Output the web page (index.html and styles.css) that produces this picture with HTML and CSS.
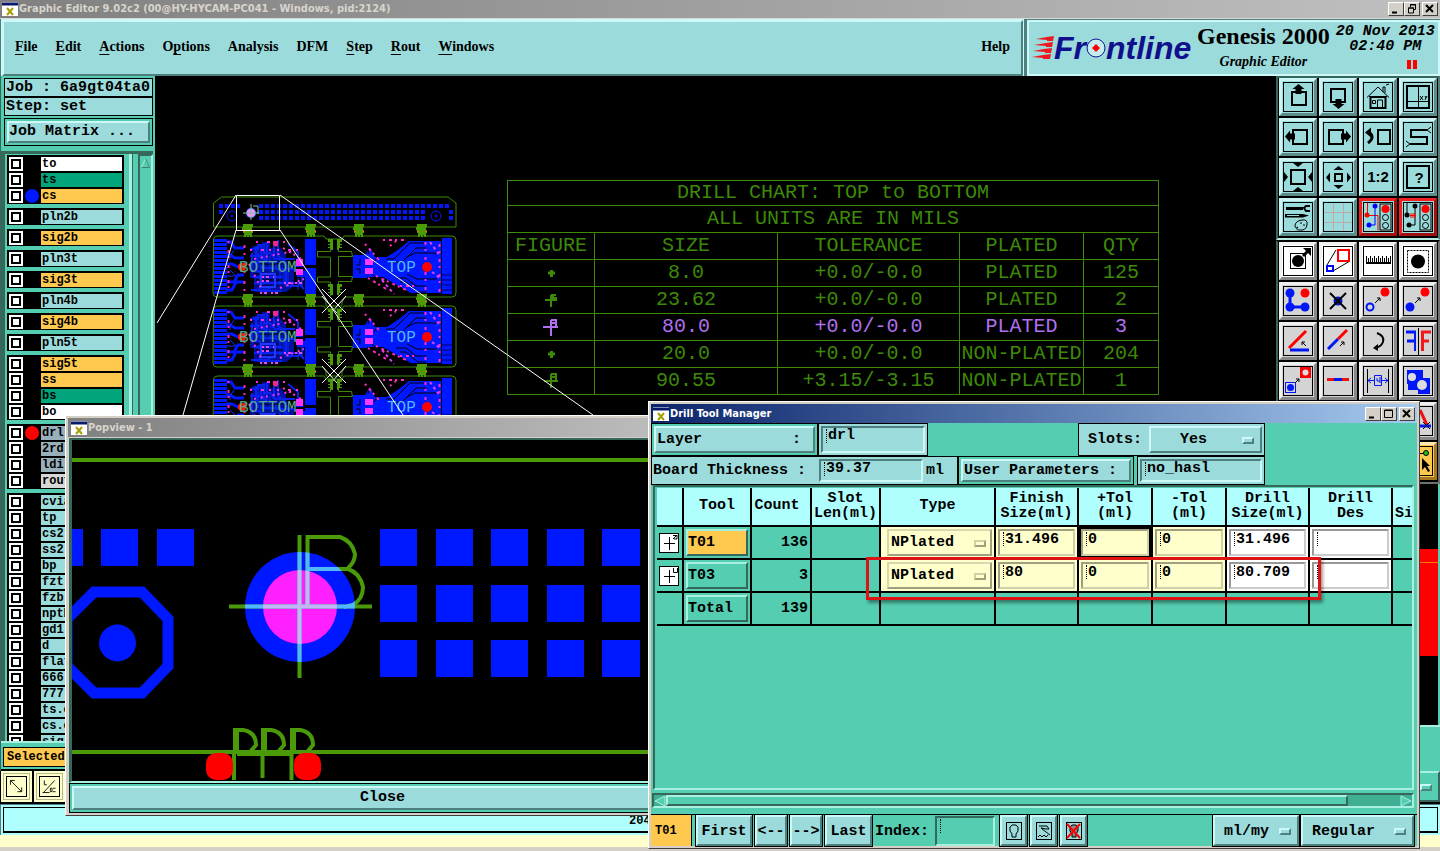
FILE: index.html
```html
<!DOCTYPE html>
<html lang="en">
<head>
  <meta charset="UTF-8">
  <meta name="viewport" content="width=device-width, initial-scale=1.0">
  <title>Graphic Editor 9.02c2</title>
  <link rel="stylesheet" href="styles.css">
</head>
<body>
  <div class="titlebar">
    <svg class="app-icon" viewBox="0 0 16 16"><rect width="16" height="14" y="1" fill="#fff"/><path d="M0 3h16" stroke="#0a1a6a" stroke-width="3"/><path d="M5 7l6 7M11 7l-6 7" stroke="#a8a000" stroke-width="2"/></svg>
    <span class="title">Graphic Editor 9.02c2 (00@HY-HYCAM-PC041 - Windows, pid:2124)</span>
    <button class="win-btn" aria-label="Minimize"><svg viewBox="0 0 12 10"><path d="M2 8.500h5" stroke="#000" stroke-width="2"/></svg></button>
    <button class="win-btn" aria-label="Restore"><svg viewBox="0 0 12 10"><path d="M4.500 3V.5h5v5H8M4 1h6" fill="none" stroke="#000"/><path d="M2.500 4h5v5h-5zM2 4h6" fill="none" stroke="#000"/></svg></button>
    <button class="win-btn last" aria-label="Close"><svg viewBox="0 0 12 10"><path d="M2 1l7 7M9 1L2 8" stroke="#000" stroke-width="2"/></svg></button>
  </div>

  <header class="header">
    <nav class="menubar">
      <a href="#"><u>F</u>ile</a>
      <a href="#"><u>E</u>dit</a>
      <a href="#"><u>A</u>ctions</a>
      <a href="#">O<u>p</u>tions</a>
      <a href="#">Analysis</a>
      <a href="#">DFM</a>
      <a href="#"><u>S</u>tep</a>
      <a href="#"><u>R</u>out</a>
      <a href="#"><u>W</u>indows</a>
      <a href="#" class="help">Help</a>
    </nav>
    <div class="brand">
      <div class="logo">
        <svg class="logo-arrows" viewBox="0 0 22 24"><g fill="#f01820"><path d="M4 3l11-2 7-1-1 5-6 0V4zM2 9l12-2 7-1-1 5-6 0v-1zM1 15l11-2 8-1-1 5-6 0v-1zM0 21l11-2 8-1-1 5-7 0v-1z"/></g></svg>
        <span>Fr</span>
        <svg class="logo-o" viewBox="0 0 20 20"><circle cx="10" cy="10" r="9" fill="#c4eeee" stroke="#10108c" stroke-width="1"/><path d="M10 6l4 4-4 4-4-4z" fill="#f00"/></svg>
        <span>ntline</span>
      </div>
      <div class="product">
        <div class="product-name">Genesis 2000</div>
        <div class="product-sub">Graphic Editor</div>
      </div>
      <div class="clock">
        <div>20 Nov 2013</div>
        <div>02:40 PM</div>
        <svg class="pause" viewBox="0 0 10 9"><path d="M0 0h4v9H0zM6 0h4v9H6z" fill="#f00"/></svg>
      </div>
    </div>
  </header>

  <main class="workspace">
    <aside class="sidebar">
      <div class="info">Job : 6a9gt04ta0</div>
      <div class="info">Step: set</div>
      <div class="matrix"><button>Job Matrix ...</button></div>
      <div class="layers">
        <div class="layer-list">
          <div class="group">
            <label class="layer"><input type="checkbox"><i></i><span class="white">to</span></label>
            <label class="layer"><input type="checkbox"><i></i><span class="green">ts</span></label>
            <label class="layer"><input type="checkbox"><i class="blue"></i><span class="orange">cs</span></label>
          </div>
          <div class="group"><label class="layer"><input type="checkbox"><i></i><span>pln2b</span></label></div>
          <div class="group"><label class="layer"><input type="checkbox"><i></i><span class="orange">sig2b</span></label></div>
          <div class="group"><label class="layer"><input type="checkbox"><i></i><span>pln3t</span></label></div>
          <div class="group"><label class="layer"><input type="checkbox"><i></i><span class="orange">sig3t</span></label></div>
          <div class="group"><label class="layer"><input type="checkbox"><i></i><span>pln4b</span></label></div>
          <div class="group"><label class="layer"><input type="checkbox"><i></i><span class="orange">sig4b</span></label></div>
          <div class="group"><label class="layer"><input type="checkbox"><i></i><span>pln5t</span></label></div>
          <div class="group">
            <label class="layer"><input type="checkbox"><i></i><span class="orange">sig5t</span></label>
            <label class="layer"><input type="checkbox"><i></i><span class="orange">ss</span></label>
            <label class="layer"><input type="checkbox"><i></i><span class="green">bs</span></label>
            <label class="layer"><input type="checkbox"><i></i><span class="white">bo</span></label>
          </div>
          <div class="group">
            <label class="layer"><input type="checkbox"><i class="red"></i><span class="slate">drl</span></label>
            <label class="layer"><input type="checkbox"><i></i><span class="slate">2rd</span></label>
            <label class="layer"><input type="checkbox"><i></i><span class="slate">ldi</span></label>
            <label class="layer"><input type="checkbox"><i></i><span class="silver">rout</span></label>
          </div>
          <div class="group">
            <label class="layer"><input type="checkbox"><i></i><span>cvia</span></label>
            <label class="layer"><input type="checkbox"><i></i><span>tp</span></label>
            <label class="layer"><input type="checkbox"><i></i><span>cs2</span></label>
            <label class="layer"><input type="checkbox"><i></i><span>ss2</span></label>
            <label class="layer"><input type="checkbox"><i></i><span>bp</span></label>
            <label class="layer"><input type="checkbox"><i></i><span>fzt</span></label>
            <label class="layer"><input type="checkbox"><i></i><span>fzb</span></label>
            <label class="layer"><input type="checkbox"><i></i><span>npth</span></label>
            <label class="layer"><input type="checkbox"><i></i><span>gd1</span></label>
            <label class="layer"><input type="checkbox"><i></i><span>d</span></label>
            <label class="layer"><input type="checkbox"><i></i><span>flat</span></label>
            <label class="layer"><input type="checkbox"><i></i><span>666</span></label>
            <label class="layer"><input type="checkbox"><i></i><span>777</span></label>
            <label class="layer"><input type="checkbox"><i></i><span>ts.o</span></label>
            <label class="layer"><input type="checkbox"><i></i><span>cs.o</span></label>
            <label class="layer"><input type="checkbox"><i></i><span>sig</span></label>
          </div>
        </div>
        <div class="vscroll"><svg viewBox="0 0 10 12"><path d="M5 1l4.500 10h-9z" fill="#55cdb0" stroke="#a8f0e0"/><path d="M5 1l4.500 10h-9" fill="none" stroke="#2f7765"/></svg></div>
      </div>
      <div class="selected"><span>Selected</span></div>
    </aside>

    <section class="canvas">
      <svg class="board">
        <defs>
          <g id="tab" fill="#4b9a08">
            <path d="M-5-7h10v3h-1v3h1v3h-1v4h-2v-2h-1v2h-2v-2h-1v2h-2v-4h-1v-3h-1v-3h1z"/>
            <path d="M-5 0h2v1h-2zM3 0h2v1h-2z" fill="#e07010"/>
          </g>
          <g id="clip" fill="#4b9a08">
            <path d="M-7-5h5v11h-2v-2h-3v-1h2v-2h-2v-1h2v-2h-2zM7-5h-5v11h2v-2h3v-1h-2v-2h2v-1h-2v-2h2z"/>
          </g>
          <g id="module">
            <g fill="none" stroke="#3d8a08">
              <path d="M13.500 60q0-4 4-4H124l2 3h16l2-3H252q4 0 4 4V113q0 4-4 4H145l-3 5v4h-16v-4l-3-5H17q-4 0-4-4z"/>
              <path d="M118 71.500h12.500v-12M138.500 59v12.500h13l1 5h-14v20h14l-1 5h-13v14M130.500 116v-14h-13v-5h13v-20h-13v-6"/>
            </g>
            <!-- edge connector and left artwork -->
            <path d="M20.500 59V115" stroke="#0018ff" stroke-width="13" stroke-dasharray="3 1"/>
            <path d="M26 62h5l4 6h9M26 75h4l5 3h9M26 84h6l8 4M26 102h8l4-7h6M26 110h6l4-8h8" fill="none" stroke="#0018ff" stroke-width="3"/>
            <path d="M30 80v-4l4-6M30 90l6 6M27 96h8" fill="none" stroke="#1030ff"/>
            <path d="M52 66h10v-4h8v6h10l6 6v10l8 6v16l-8 6H54V98h-4V80h4z" fill="#0010a0"/>
            <path d="M50 69h8v-4h6v8h6l5 6h20M50 76h12l6 7h8v6h18M51 82h10v6h14M52 73v18h8v20h22M56 66v26M61 66v14M67 62v20M74 64v14M52 97h30M54 103h44l6 6M51 110h16l6-4h26M78 60v16l8 6v24M88 64l10 8v14M92 88l10 6v14" fill="none" stroke="#0820f0" stroke-width="2"/>
            <path d="M58 72v16M64 70v20M70 76v14M80 84v24M84 90v16M88 92v10M66 110v5M98 98v12" fill="none" stroke="#0828ff"/>
            <path d="M54 94h24M56 100h26M57 106h28M83 72h12M60 84h22" fill="none" stroke="#000"/>
            <path d="M61 94h14v13H61z" fill="none" stroke="#2038ff" stroke-width="2"/>
            <path d="M28.500 61V114" stroke="#ff28c0" stroke-width="2" stroke-dasharray="2 7 3 3"/>
            <path d="M44.500 65V114" stroke="#f030a0" stroke-width="2" stroke-dasharray="3 5 2 8"/>
            <path d="M50 70h52M56 62h34" stroke="#ff30d8" stroke-width="2" stroke-dasharray="2 9 3 5 2 6"/>
            <path d="M54 79l40-8M83 68l20 12M80 108l24-9M49 84l14 28" stroke="#ff30f0" stroke-width="2" stroke-dasharray="2 5 2 3"/>
            <path d="M62 97h12M62 101h10M60 113h22M84 103h20" stroke="#e048ff" stroke-width="2" stroke-dasharray="2 2 3 4"/>
            <path d="M73 61h5v4l-2 2-3-2z" fill="#f02890"/>
            <path d="M105 59h11v26h-11zM105 88h11v26h-11zM94 85h9v2h-9zM97 91h8v6h-8z" fill="#0018ff"/>
            <path d="M96 79h7v7h-7zM96 89h7v6h-7z" fill="#ff30ff"/>
            <!-- fan-out on the right part -->
            <path d="M153 75h12l5-8 5 10h12l12-8 10-8h32v52h-30l-14-8-14-8h-16v1h-14zM242 58h10v56h-10z" fill="#0018ff"/>
            <path d="M186 79h8l16-16h14M190 82h12l14-14h10M196 98h10l10 8h10M200 102h6l12 10h8M207 94l10 5h20M207 77l8-4h24M170 66l-2 8M160 79v6h-4M160 94v-5h-4M178 76l-4 6M176 98l-4-4" fill="none" stroke="#000"/>
            <path d="M242 95h10M242 100h10M242 105h10M242 110h10" stroke="#000058"/>
            <path d="M165 79h8v6h-8zM165 88h8v6h-8z" fill="#ff38ff"/>
            <path d="M165 64l14 16M190 66l6-5M183 60h24M168 98l20 12M176 96l30 14M200 106h16" stroke="#ff2cc0" stroke-width="2" stroke-dasharray="2 4 3 3"/>
            <path d="M225.500 62V114M239.500 64V112" stroke="#ff28e0" stroke-width="2" stroke-dasharray="3 4 2 6"/>
            <path d="M230 62l10 14M232 92l8 6M182 100l12 14" stroke="#e040ff" stroke-width="2" stroke-dasharray="3 3"/>
            <circle cx="42" cy="87" r="4" fill="#ff2000"/>
            <circle cx="227" cy="87" r="5" fill="#f00"/>
            <text x="39" y="92" fill="#58a888">BOTTOM</text>
            <text x="187" y="92" fill="#50b8ff">TOP</text>
            <use href="#tab" x="48" y="51"/><use href="#tab" x="111" y="51"/>
            <use href="#tab" x="159" y="51"/><use href="#tab" x="222" y="51"/>
            <use href="#clip" x="135" y="64"/>
            <use href="#clip" x="135" y="109"/>
            <path d="M122 109l24 24M146 109l-24 24M122 116l15 17M146 116l-15 17" stroke="#fff" stroke-width="1"/>
          </g>
        </defs>
        <g transform="translate(45 104)">
          <path d="M13.500 23l8-6H248l8 6V47H13.500z" fill="none" stroke="#3d8a08"/>
          <path d="M19 26h21M59 26h190M19 32h4M59 32h166M59 38h166M249 32h4M249 38h4" stroke="#0018ff" stroke-width="4" stroke-dasharray="4 2"/>
          <g fill="none" stroke="#0018ff" stroke-width="1">
            <circle cx="32" cy="36" r="5"/><circle cx="32" cy="36" r="1"/>
            <circle cx="236" cy="36" r="5"/><circle cx="236" cy="36" r="1"/>
          </g>
          <circle cx="51" cy="33" r="5" fill="#5080ff"/><circle cx="51" cy="33" r="4" fill="#ff90ff"/>
          <path d="M43 33h16M51 24v16M53 26h5v8" fill="none" stroke="#78c8a0"/>
          <use href="#module"/>
          <use href="#module" y="70"/>
          <use href="#module" y="140"/>
          <g fill="none" stroke="#fff">
            <path d="M36.500 15.500h43v35h-43zM36 15L-43 143M36 50L-17 235M80 15L393 235M80 50L203 235"/>
          </g>
        </g>
      </svg>

      <table class="drill-chart">
        <colgroup><col class="c1"><col class="c2"><col class="c3"><col class="c4"><col class="c5"></colgroup>
        <thead>
          <tr class="chart-title"><th colspan="5">DRILL CHART: TOP to BOTTOM</th></tr>
          <tr><th colspan="5">ALL UNITS ARE IN MILS</th></tr>
          <tr><th>FIGURE</th><th>SIZE</th><th>TOLERANCE</th><th>PLATED</th><th>QTY</th></tr>
        </thead>
        <tbody>
          <tr><td><svg viewBox="0 0 16 20"><path d="M5 10h7M8.500 7v7" stroke="#3d8a08" stroke-width="3"/></svg></td><td>8.0</td><td>+0.0/-0.0</td><td>PLATED</td><td>125</td></tr>
          <tr><td><svg viewBox="0 0 16 20"><path d="M2 10h12M8 5v12" stroke="#3d8a08" stroke-width="2"/><path d="M8 4h5v2h-2v1h3v3H8z" fill="#3d8a08"/></svg></td><td>23.62</td><td>+0.0/-0.0</td><td>PLATED</td><td>2</td></tr>
          <tr class="current"><td><svg viewBox="0 0 16 20"><path d="M0 10h15M8 3v16" stroke="#b070f0" stroke-width="2"/><path d="M8 3h5v7M8 6h5" fill="none" stroke="#b070f0" stroke-width="2"/></svg></td><td>80.0</td><td>+0.0/-0.0</td><td>PLATED</td><td>3</td></tr>
          <tr><td><svg viewBox="0 0 16 20"><path d="M5 10h7M8.500 7v7" stroke="#3d8a08" stroke-width="3"/></svg></td><td>20.0</td><td>+0.0/-0.0</td><td>NON-PLATED</td><td>204</td></tr>
          <tr><td><svg viewBox="0 0 16 20"><path d="M1 10h14M8 3v14" stroke="#3d8a08" stroke-width="2"/><path d="M8 3h5v7M8 6h5" fill="none" stroke="#3d8a08" stroke-width="2"/></svg></td><td>90.55</td><td>+3.15/-3.15</td><td>NON-PLATED</td><td>1</td></tr>
        </tbody>
      </table>
    </section>

    <aside class="toolbox">
      <div class="tools view-tools">
        <button aria-label="Pan up"><svg viewBox="0 0 30 30"><rect x="9" y="10" width="14" height="13" class="s2"/><path d="M15.500 2l6 5h-3v5h-6V7h-3z"/></svg></button>
        <button aria-label="Pan down"><svg viewBox="0 0 30 30"><rect x="8" y="7" width="14" height="13" class="s2"/><path d="M15.500 27l-6-5h3v-5h6v5h3z"/></svg></button>
        <button aria-label="Home view"><svg viewBox="0 0 30 30"><path d="M4 15.500L15 5l11 10.500M6 14.500h18M20 10V5h2v6M23 3l3-1" class="s1"/><rect x="7.500" y="15" width="15" height="11" class="s2"/><path d="M14.500 26v-8h5v8M9.500 18.500h3v3h-3z" class="s1"/></svg></button>
        <button aria-label="Coordinates"><svg viewBox="0 0 30 30"><rect x="4" y="4" width="22" height="22" class="s2"/><path d="M15.500 4v22M4 19.500h22" class="s1"/><path d="M17 14l3 4M20 14l-3 4M22 14l1 2M24 14l-2 4" class="s1"/></svg></button>
        <button aria-label="Pan left"><svg viewBox="0 0 30 30"><rect x="10" y="8" width="14" height="14" class="s2"/><path d="M2 14.500l5-6v3h5v6H7v3z"/></svg></button>
        <button aria-label="Pan right"><svg viewBox="0 0 30 30"><rect x="6" y="8" width="14" height="14" class="s2"/><path d="M28 14.500l-5-6v3h-5v6h5v3z"/></svg></button>
        <button aria-label="Previous view"><svg viewBox="0 0 30 30"><rect x="15" y="8" width="12" height="14" class="s2"/><path d="M5 11h2q5 5-2 10" class="s3"/><path d="M2 10.500l6-5v10z"/></svg></button>
        <button aria-label="Snake"><svg viewBox="0 0 30 30"><path d="M24 8H8v7h16v7H7" class="s2"/><path d="M24 8l4-3M24 8l4 3M7 22l-4-3M7 22l-4 3" class="s1"/></svg></button>
        <button aria-label="Zoom out"><svg viewBox="0 0 30 30"><rect x="8" y="8" width="14" height="14" class="s2"/><path d="M15 5l-5-4h10zM15 25l-5 4h10zM5 15l-4-5v10zM25 15l4-5v10z"/></svg></button>
        <button aria-label="Zoom in"><svg viewBox="0 0 30 30"><rect x="12" y="12" width="7" height="7" class="s2"/><path d="M15.500 4l-5 4h10zM15.500 27l-5-4h10zM3 15.500l4-5v10zM28 15.500l-4-5v10z"/></svg></button>
        <button aria-label="Zoom ratio"><svg viewBox="0 0 30 30"><text x="15" y="20">1:2</text></svg></button>
        <button aria-label="Help"><svg viewBox="0 0 30 30"><rect x="4" y="4" width="22" height="22" class="s2"/><text x="16" y="21">?</text></svg></button>
        <button aria-label="Preferences"><svg viewBox="0 0 30 30"><path d="M3 5h17v3H3zM2 12h18l6 1.500-6 2H2z"/><path d="M27 4h-4l-2 2 2 3h4" class="s2"/><path d="M4 13.500h12" stroke="#9bdbdb"/><path d="M12 24q0-5 7-6 6-1 5 5t-8 5q-4 0-1-3-3 2-3-1zM17 21h2M21 22v2" class="s1"/></svg></button>
        <button aria-label="Grid"><svg viewBox="0 0 30 30"><path d="M10.500 1v28M20.500 1v28M1 10.500h28M1 20.500h28" stroke="#c0a8a8" fill="none"/></svg></button>
        <button class="alert" aria-label="Net check"><svg viewBox="0 0 30 30"><rect x="17" y="2" width="11" height="26" class="s1"/><circle cx="22.500" cy="7" r="4" fill="#f00"/><circle cx="22.500" cy="15.500" r="3" class="s1"/><circle cx="22.500" cy="23.500" r="3" class="s1"/><path d="M4.500 1v12M4 13.500h11v15" stroke="#f00" fill="none"/><path d="M12 4v19H6" stroke="#00f" fill="none"/><circle cx="12" cy="4" r="2.500" fill="#00f"/><circle cx="6" cy="23" r="2.500" fill="#00f"/><circle cx="4" cy="13" r="2.500" fill="#f00"/></svg></button>
        <button class="alert" aria-label="Spacing check"><svg viewBox="0 0 30 30"><rect x="17" y="2" width="11" height="26" class="s1"/><circle cx="22.500" cy="7" r="4" fill="#f00"/><circle cx="22.500" cy="15.500" r="3" class="s1"/><circle cx="22.500" cy="23.500" r="3" class="s1"/><path d="M4 1v12M12 4v19H7" class="s1"/><path d="M7 13.500h6M8 11v5M10 11v5M12 11v5" stroke="#f00"/><circle cx="12" cy="4" r="2.500"/><circle cx="6" cy="23" r="2.500"/><circle cx="4" cy="13" r="2.500"/></svg></button>
      </div>
      <div class="tools edit-tools">
        <button class="paper" aria-label="Select"><svg viewBox="0 0 30 30"><rect x="7.500" y="7.500" width="15" height="15" class="s1"/><circle cx="15" cy="15" r="6"/><path d="M20 10l5-5" class="s3"/><path d="M20 2h8v8z"/></svg></button>
        <button class="paper" aria-label="Frame select"><svg viewBox="0 0 30 30"><path d="M4 19L13 4M10 25l17-10" class="s1"/><rect x="15" y="4" width="11" height="11" fill="none" stroke="#f00" stroke-width="2"/><rect x="4" y="20" width="6" height="5" fill="none" stroke="#00f" stroke-width="2"/></svg></button>
        <button class="paper" aria-label="Measure"><svg viewBox="0 0 30 30"><path d="M3 16h25v2H3z"/><path d="M3 14h25" stroke="#000" stroke-width="4" stroke-dasharray="1 1"/><path d="M3 12h25" stroke="#000" stroke-width="4" stroke-dasharray="1 3"/></svg></button>
        <button class="paper" aria-label="Pad select"><svg viewBox="0 0 30 30"><rect x="4.500" y="4.500" width="21" height="22" class="s1" stroke-dasharray="2 1"/><circle cx="15" cy="15.500" r="7"/></svg></button>
        <button aria-label="Connect"><svg viewBox="0 0 30 30"><path d="M7 7v14h15" fill="none" stroke="#0018f8" stroke-width="3"/><g fill="#0018f8"><circle cx="7" cy="7" r="4.500"/><circle cx="7" cy="21" r="4.500"/><circle cx="22" cy="21" r="4.500"/></g><circle cx="22" cy="7" r="4.500" fill="#f00"/></svg></button>
        <button aria-label="Delete"><svg viewBox="0 0 30 30"><circle cx="15" cy="15" r="4.500" fill="#0018c8"/><path d="M7 7l16 16M23 7L7 23" class="s2"/></svg></button>
        <button aria-label="Move"><svg viewBox="0 0 30 30"><circle cx="7" cy="21" r="3.500" fill="none" stroke="#0018f8" stroke-width="2"/><circle cx="22" cy="6" r="4.500" fill="#f00"/><path d="M12 17l5-5M14 12h3v3" class="s1"/></svg></button>
        <button aria-label="Copy"><svg viewBox="0 0 30 30"><circle cx="7" cy="21" r="4.500" fill="#0018f8"/><circle cx="22" cy="6" r="4.500" fill="#f00"/><path d="M12 17l5-5M14 12h3v3" class="s1"/></svg></button>
        <button aria-label="Angle"><svg viewBox="0 0 30 30"><path d="M6 22L23 5" stroke="#f00" stroke-width="3"/><path d="M7 24h19" stroke="#0018f8" stroke-width="3"/><path d="M23 20l-4-4M19 19v-3h3" class="s1"/></svg></button>
        <button aria-label="Stretch"><svg viewBox="0 0 30 30"><path d="M5 23l10-10" stroke="#0018f8" stroke-width="3"/><path d="M15 13l9-9" stroke="#f00" stroke-width="3"/><path d="M17 20l4-4M18 16h3v3" class="s1"/></svg></button>
        <button aria-label="Rotate"><svg viewBox="0 0 30 30"><path d="M14 7q8 3 6 9-2 5-8 6" class="s2"/><path d="M10 22l5-4v7z"/></svg></button>
        <button aria-label="Mirror"><svg viewBox="0 0 30 30"><path d="M15.500 2v27" class="s1"/><g stroke="#0018f8" stroke-width="2"><line x1="12" y1="5" x2="12" y2="25"/><line x1="3" y1="6" x2="13" y2="6" stroke-width="3"/><line x1="4" y1="15" x2="12" y2="15" stroke-width="3"/></g><g stroke="#f01818" stroke-width="3"><line x1="19.500" y1="5" x2="19.500" y2="25"/><line x1="18" y1="6" x2="28" y2="6"/><line x1="19" y1="15" x2="26" y2="15"/></g></svg></button>
        <button aria-label="Substitute"><svg viewBox="0 0 30 30"><rect x="17" y="1" width="11" height="11" fill="#f00"/><circle cx="22.500" cy="6.500" r="3" fill="#ddd"/><rect x="2.500" y="16.500" width="10" height="10" fill="none" stroke="#0018f8"/><circle cx="7.500" cy="21.500" r="3.500" fill="#0018f8"/><path d="M12 17l4-4M13 13h3v3" class="s1"/></svg></button>
        <button aria-label="Break"><svg viewBox="0 0 30 30"><path d="M4 13.500h22" stroke="#f01010" stroke-width="3"/><path d="M11 13.500h8" stroke="#0018f8" stroke-width="3"/></svg></button>
        <button aria-label="Resize"><svg viewBox="0 0 30 30"><path d="M4.500 3v24M25.500 3v24" class="s1"/><path d="M5 14.500h6M19 14.500h6M8 12l-3 2.500 3 2.500M22 12l3 2.500-3 2.500M11.500 9.500h7v10h-7zM14 12v3h3M17 11v6" fill="none" stroke="#0018f8"/></svg></button>
        <button aria-label="Merge"><svg viewBox="0 0 30 30"><path d="M4 4h16v8h7v16H15v-4H5V18H4z" fill="#0018f8"/><circle cx="9" cy="11" r="4" fill="#ddd"/><circle cx="19" cy="19" r="5" fill="#ddd"/></svg></button>
        <button aria-label="Chamfer"><svg viewBox="0 0 30 30"></svg></button>
        <button aria-label="Surface"><svg viewBox="0 0 30 30"></svg></button>
        <button aria-label="Fill"><svg viewBox="0 0 30 30"></svg></button>
        <button aria-label="Trim"><svg viewBox="0 0 30 30"><path d="M17 4l7 15" fill="none" stroke="#f01010" stroke-width="3"/><path d="M2 20h26" stroke="#0018f8" stroke-width="3"/><path d="M20 16l7 7M27 16l-7 7" class="s1"/></svg></button>
        <button aria-label="Net"><svg viewBox="0 0 30 30"></svg></button>
        <button aria-label="Layer"><svg viewBox="0 0 30 30"></svg></button>
        <button aria-label="Symbol"><svg viewBox="0 0 30 30"></svg></button>
        <button class="active" aria-label="Pick"><svg viewBox="0 0 30 30"><path d="M8 7.500h14" class="s1"/><circle cx="23" cy="7" r="2.500" fill="#20c020" stroke="#000"/><path d="M19 12l8 8-3 0 3 5-2 1-3-5-3 3z"/></svg></button>
      </div>
      <div class="overview"><div class="overview-board"></div></div>
      <div class="overview-foot"></div>
    </aside>
  </main>

  <footer class="footer">
    <div class="bottom-tools">
      <button aria-label="Diagonal"><svg viewBox="0 0 22 22"><path d="M4 4l13 13M4 9V4h5M17 12v5h-5" class="s1"/></svg></button>
      <button aria-label="Fraction"><svg viewBox="0 0 22 22"><path d="M4 18L17 4M5 4v5h3M12 13h2v4h-2zM15 13h3M15 17h3M3 18h8" class="s1"/></svg></button>
      <span class="menu bottom-menu"><select aria-label="Snap"><option></option></select></span>
    </div>
    <div class="status"><div class="status-line">204</div></div>
    <div class="prompt"></div>
  </footer>

  <section class="window popview">
    <div class="window-title inactive">
      <svg class="app-icon" viewBox="0 0 16 16"><rect width="16" height="14" y="1" fill="#fff"/><path d="M0 3h16" stroke="#0a1a6a" stroke-width="3"/><path d="M5 7l6 7M11 7l-6 7" stroke="#a8a000" stroke-width="2"/></svg>
      <span class="title">Popview - 1</span>
    </div>
    <div class="popview-view">
      <svg>
        <defs>
          <clipPath id="ring"><circle cx="228" cy="167" r="55"/></clipPath>
          <clipPath id="hole"><circle cx="228" cy="167" r="37"/></clipPath>
          <path id="mark" fill="none" stroke-width="4" d="M227.500 95V238M157 166.500H300M235.500 167V97H268q12 4 15 17 0 8-7 14M234 129h42q12 4 15 18 0 12-10 18l-9 2"/>
        </defs>
        <path d="M0 20h640" stroke="#4b9a08" stroke-width="4"/>
        <path d="M0 312h640" stroke="#4b9a08" stroke-width="4"/>
        <g fill="#0018ff">
          <path d="M0 89h11v37H0zM29 89h37v37H29zM85 89h37v37H85z"/>
          <path d="M308 89h37v37h-37zM364 89h37v37h-37zM419 89h37v37h-37zM475 89h37v37h-37zM530 89h38v37h-38z"/>
          <path d="M308 145h37v37h-37zM364 145h37v37h-37zM419 145h37v37h-37zM475 145h37v37h-37zM530 145h38v37h-38z"/>
          <path d="M308 200h37v37h-37zM364 200h37v37h-37zM419 200h37v37h-37zM475 200h37v37h-37zM530 200h38v37h-38z"/>
          <circle cx="45.500" cy="203" r="18.500"/>
        </g>
        <path d="M22 152h48l26 27v47l-26 27H22l-27-27v-47z" fill="none" stroke="#0018ff" stroke-width="11"/>
        <circle cx="228" cy="167" r="55" fill="#0018ff"/>
        <circle cx="228" cy="167" r="37" fill="#ff20ff"/>
        <use href="#mark" stroke="#4b9a08"/>
        <use href="#mark" stroke="#50b8ff" clip-path="url(#ring)"/>
        <use href="#mark" stroke="#c4b4f8" clip-path="url(#hole)"/>
        <g fill="none" stroke="#4b9a08" stroke-width="4">
          <path d="M163 312V290h8q13 2 13 15l-6 7M191 312V290h8q13 2 13 15l-6 7M220 312V290h8q13 2 13 15l-6 7M165 314h55"/>
          <path d="M165 291v21M193 291v21M222 291v21M162 312v28M190.500 312v26M219.500 312v28"/>
        </g>
        <rect x="134" y="313" width="27" height="27" rx="10" fill="#f00"/>
        <rect x="222" y="313" width="27" height="27" rx="10" fill="#f00"/>
      </svg>
    </div>
    <div class="popview-foot"><button>Close</button></div>
  </section>

  <section class="window manager">
    <div class="window-title">
      <svg class="app-icon" viewBox="0 0 16 16"><rect width="16" height="14" y="1" fill="#fff"/><path d="M0 3h16" stroke="#0a1a6a" stroke-width="3"/><path d="M5 7l6 7M11 7l-6 7" stroke="#a8a000" stroke-width="2"/></svg>
      <span class="title">Drill Tool Manager</span>
      <button class="win-btn" aria-label="Minimize"><svg viewBox="0 0 12 10"><path d="M2 8.500h5" stroke="#000" stroke-width="2"/></svg></button>
      <button class="win-btn" aria-label="Maximize"><svg viewBox="0 0 12 10"><path d="M1.500 1h8v7.500h-8zM1 1.500h9" fill="none" stroke="#000"/></svg></button>
      <button class="win-btn last" aria-label="Close"><svg viewBox="0 0 12 10"><path d="M2 1l7 7M9 1L2 8" stroke="#000" stroke-width="2"/></svg></button>
    </div>
    <div class="manager-body">
      <div class="form-row row-one">
        <div class="cell layer-cell"><button class="wide"><span>Layer</span><span>:</span></button></div>
        <div class="cell cyan layer-value"><span class="field"><input type="text" value="drl" aria-label="Layer"></span></div>
        <div class="cell cyan slots">
          <label for="slots">Slots:</label>
          <span class="menu"><select id="slots"><option>Yes</option><option>No</option></select></span>
        </div>
      </div>
      <div class="form-row row-two">
        <div class="cell cyan thickness">
          <label for="thick">Board Thickness :</label>
          <span class="field"><input type="text" id="thick" value="39.37"></span>
          <span>ml</span>
        </div>
        <div class="cell params"><button>User Parameters :</button></div>
        <div class="cell cyan params-value"><span class="field"><input type="text" value="no_hasl" aria-label="User Parameters"></span></div>
      </div>

      <div class="tool-area">
        <table class="tool-table">
          <thead>
            <tr>
              <th class="w-plus"></th><th class="w-tool">Tool</th><th class="w-count">Count</th><th class="w-slot">Slot<br>Len(ml)</th><th class="w-type">Type</th>
              <th class="w-size">Finish<br>Size(ml)</th><th class="w-tol">+Tol<br>(ml)</th><th class="w-tol">-Tol<br>(ml)</th><th class="w-size">Drill<br>Size(ml)</th><th class="w-size">Drill<br>Des</th><th class="w-rest"><br>Si</th>
            </tr>
          </thead>
          <tbody>
            <tr>
              <td class="plus"><button aria-label="Expand T01"><svg viewBox="0 0 18 18"><path d="M9.500 3v13M4 9.500h11M13 5l4-4v4h-3M13 1.500h4" fill="none" stroke="#000"/></svg></button></td>
              <td class="tool"><button class="on">T01</button></td>
              <td class="num">136</td><td></td>
              <td class="cream"><span class="menu"><select aria-label="Type T01"><option>NPlated</option></select></span></td>
              <td class="cream"><span class="field"><input type="text" value="31.496" aria-label="Finish size"></span></td>
              <td class="cream focus"><span class="field"><input type="text" value="0" aria-label="Plus tolerance"></span></td>
              <td class="cream"><span class="field"><input type="text" value="0" aria-label="Minus tolerance"></span></td>
              <td class="plain"><span class="field"><input type="text" value="31.496" aria-label="Drill size"></span></td>
              <td class="plain"><span class="field"><input type="text" value="" aria-label="Drill designator"></span></td>
              <td></td>
            </tr>
            <tr>
              <td class="plus"><button aria-label="Expand T03"><svg viewBox="0 0 18 18"><path d="M9.500 3v13M4 9.500h11M13.500 1v4.500h4V1" fill="none" stroke="#000"/></svg></button></td>
              <td class="tool"><button>T03</button></td>
              <td class="num">3</td><td></td>
              <td class="cream"><span class="menu"><select aria-label="Type T03"><option>NPlated</option></select></span></td>
              <td class="cream"><span class="field"><input type="text" value="80" aria-label="Finish size"></span></td>
              <td class="cream"><span class="field"><input type="text" value="0" aria-label="Plus tolerance"></span></td>
              <td class="cream"><span class="field"><input type="text" value="0" aria-label="Minus tolerance"></span></td>
              <td class="plain"><span class="field"><input type="text" value="80.709" aria-label="Drill size"></span></td>
              <td class="plain"><span class="field"><input type="text" value="" aria-label="Drill designator"></span></td>
              <td></td>
            </tr>
            <tr>
              <td></td><td class="tool"><button>Total</button></td><td class="num">139</td>
              <td></td><td></td><td></td><td></td><td></td><td></td><td></td><td></td>
            </tr>
          </tbody>
        </table>
      </div>

      <div class="hscroll">
        <svg viewBox="0 0 12 12"><path d="M1 6l10-5v10z" fill="#55cdb0" stroke="#a8f0e0"/></svg>
        <div class="thumb"></div>
        <svg viewBox="0 0 12 12"><path d="M11 6L1 1v10z" fill="#55cdb0" stroke="#a8f0e0"/></svg>
      </div>

      <div class="manager-bar">
        <div class="current-tool">T01</div>
        <button class="b-first">First</button>
        <button class="b-step">&lt;--</button>
        <button class="b-step">--&gt;</button>
        <button class="b-last">Last</button>
        <label for="index">Index:</label>
        <span class="field index"><input type="text" id="index" value=""></span>
        <button class="b-icon" aria-label="Highlight"><svg viewBox="0 0 16 18"><rect x=".5" y=".5" width="15" height="17" fill="none" stroke="#000"/><path d="M6 12l-2-3V5l2-2h4l2 2v4l-2 3v3H6z" class="s1"/></svg></button>
        <button class="b-icon" aria-label="Redraw"><svg viewBox="0 0 16 18"><rect x=".5" y=".5" width="15" height="17" fill="none" stroke="#000"/><path d="M3 4h8l2 3-3 0-5-1 5 4 4 3M2 15l2-2 2 2 2-2 2 2 2-2" class="s1"/></svg></button>
        <button class="b-icon" aria-label="Clear highlight"><svg viewBox="0 0 16 18"><rect x=".5" y=".5" width="15" height="17" fill="none" stroke="#000"/><path d="M6 12l-2-3V5l2-2h4l2 2v4l-2 3v3H6z" fill="#888" stroke="#000"/><path d="M1 2l13 14M14 2L1 16" stroke="#f00" stroke-width="2"/></svg></button>
        <span class="menu units"><select aria-label="Units"><option>ml/my</option></select></span>
        <span class="menu mode"><select aria-label="Mode"><option>Regular</option></select></span>
      </div>
    </div>
    <div class="callout"></div>
  </section>
</body>
</html>
```
FILE: styles.css
```css
*, *::before, *::after {
  box-sizing: border-box;
}

body {
  position: relative;
  display: flex;
  flex-direction: column;
  height: 100vh;
  margin: 0;
  overflow: hidden;
  background-color: #000;
  color: #000;
  font: bold 15px/18px "Liberation Mono", monospace;
}

button, input, select {
  margin: 0;
  padding: 0;
  border: 0;
  border-radius: 0;
  background: none;
  color: inherit;
  font: inherit;
  outline: none;
}

svg {
  display: block;
}

.s1, .s2, .s3 {
  fill: none;
  stroke: #000;
  stroke-width: 1;
}

.s2 {
  stroke-width: 2;
}

.s3 {
  stroke-width: 3;
}

/* title bars */
.titlebar, .window-title {
  display: flex;
  flex: none;
  align-items: center;
  height: 19px;
  padding: 0 2px;
  background: linear-gradient(90deg, #808080, #c0c0c0);
  color: #d8d4cc;
  font: bold 11px/16px "DejaVu Sans Condensed", "DejaVu Sans", sans-serif;
}

.titlebar {
  border-bottom: 1px solid #d8d8d8;
}

.title {
  flex: 1;
  white-space: nowrap;
}

.app-icon {
  width: 16px;
  height: 16px;
  margin-right: 1px;
}

.win-btn {
  width: 16px;
  height: 14px;
  padding: 1px;
  background-color: #d4d0c8;
  border: 1px solid;
  border-color: #fff #404040 #404040 #fff;
}

.win-btn.last {
  margin-left: 2px;
}

.win-btn svg {
  width: 12px;
  height: 10px;
}

/* menu and brand */
.header {
  display: flex;
  flex: none;
  height: 57px;
  padding-top: 1px;
  background-color: #4f8080;
}

.menubar {
  display: flex;
  flex: 1;
  align-items: center;
  gap: 18px;
  margin-left: 2px;
  padding: 0 11px 2px;
  background-color: #9bdbdb;
  border: 2px solid;
  border-color: #ccf8f8 #4f8080 #4f8080 #ccf8f8;
  outline: 1px solid #ccf8f8;
  font: bold 14px/18px "Liberation Serif", serif;
}

.menubar a {
  color: #000;
  text-decoration: none;
}

.menubar u {
  text-underline-offset: 3px;
}

.menubar .help {
  margin-left: auto;
}

.brand {
  display: flex;
  width: 413px;
  margin-left: 4px;
  background-color: #9bdbdb;
  border: 2px solid #ccf8f8;
}

.logo {
  display: flex;
  flex: none;
  align-items: center;
  padding-left: 3px;
  color: #10108c;
  font: italic bold 32px/50px "Liberation Sans", sans-serif;
}

.logo-arrows {
  flex: none;
  width: 22px;
  height: 24px;
}

.logo-o {
  flex: none;
  width: 20px;
  height: 20px;
}

.product {
  flex: none;
  width: 141px;
  padding-left: 3px;
  text-align: center;
  font: bold 24px/28px "Liberation Serif", serif;
  white-space: nowrap;
}

.product-sub {
  font: italic bold 14px/24px "Liberation Serif", serif;
}

.clock {
  flex: 1;
  text-align: center;
  font-style: italic;
  line-height: 15px;
  padding-top: 2px;
  white-space: nowrap;
}

.pause {
  width: 10px;
  height: 9px;
  margin: 6px 21px 0 auto;
}

/* work area */
.workspace {
  display: flex;
  flex: 1;
  min-height: 0;
}

.sidebar {
  display: flex;
  flex-direction: column;
  width: 155px;
  padding: 2px 2px 0 3px;
  background-color: #55cdb0;
  border-left: 1px solid #35685a;
  white-space: nowrap;
}

.info {
  height: 19px;
  padding: 0 1px;
  background-color: #9bdbdb;
  border: 1px solid #000;
}

.matrix {
  height: 28px;
  margin-top: 2px;
  padding: 2px;
  border: 1px solid #000;
}

.matrix button {
  width: 100%;
  height: 22px;
  background-color: #9bdbdb;
  border: 2px solid;
  border-color: #ccf8f8 #4f8080 #4f8080 #ccf8f8;
  line-height: 16px;
  text-align: left;
}

.layers {
  display: flex;
  flex: 1;
  min-height: 0;
  margin: 5px 0 0 -3px;
  border-top: 3px solid #35685a;
  border-left: 4px solid #35685a;
}

.layer-list {
  display: flex;
  flex: 1;
  flex-direction: column;
  gap: 4px;
  overflow: hidden;
  margin-right: 6px;
  padding: 1px 5px 0 2px;
  border-right: 3px solid #a8f0e0;
  outline: 1px solid #35685a;
}

.group {
  flex: none;
  padding-top: 1px;
  background-color: #000;
}

.layer {
  display: flex;
  align-items: center;
  height: 16px;
  padding: 0 2px;
  font-size: 12px;
  line-height: 14px;
}

.layer input {
  width: 14px;
  height: 14px;
  appearance: none;
  background-color: #fff;
  border: 2px solid #fff;
  box-shadow: inset 0 0 0 2px #000;
}

.layer i {
  width: 14px;
  height: 14px;
  margin: 0 2px;
  border-radius: 7px;
}

.layer i.blue {
  background-color: #0018ff;
}

.layer i.red {
  background-color: #f00;
}

.layer span {
  flex: 1;
  height: 14px;
  padding-left: 1px;
  background-color: #9bdbdb;
}

.layer .white { background-color: #fff; }
.layer .green { background-color: #00a57c; }
.layer .orange { background-color: #ffc84e; }
.layer .slate { background-color: #98b0bc; }
.layer .silver { background-color: #d8d8d8; }

.vscroll {
  width: 15px;
  padding: 1px;
  background-color: #55cdb0;
  border: 2px solid;
  border-color: #35685a #a8f0e0 #a8f0e0 #35685a;
}

.vscroll svg {
  width: 9px;
  height: 12px;
}

.selected {
  margin-left: -3px;
  padding: 4px 2px 2px;
  border-top: 2px solid #a8f0e0;
  border-bottom: 2px solid #000;
}

.selected span {
  display: block;
  height: 20px;
  padding-left: 3px;
  background-color: #ffc84e;
  border: 1px solid #000;
  font-size: 12px;
}

.canvas {
  position: relative;
  flex: 1;
  overflow: hidden;
  padding: 104px 0 0 352px;
  background-color: #000;
}

.board {
  position: absolute;
  top: 0;
  left: 0;
  width: 100%;
  height: 100%;
  font: 16px "Liberation Mono", monospace;
}

.drill-chart {
  width: 651px;
  table-layout: fixed;
  border-collapse: collapse;
  color: #3d8a08;
  font: 20px/24px "Liberation Mono", monospace;
  text-align: center;
  white-space: nowrap;
}

.drill-chart th, .drill-chart td {
  height: 27px;
  padding: 0;
  border: 1px solid #3d8a08;
  font-weight: normal;
}

.drill-chart .chart-title th {
  height: 24px;
}

.drill-chart .c1 { width: 87px; }
.drill-chart .c2 { width: 183px; }
.drill-chart .c3 { width: 182px; }
.drill-chart .c4 { width: 124px; }
.drill-chart .c5 { width: 75px; }

.drill-chart svg {
  width: 16px;
  height: 20px;
  margin: 0 auto;
}

.drill-chart .current {
  color: #b070f0;
}

/* right hand tool buttons */
.toolbox {
  display: flex;
  flex-direction: column;
  width: 164px;
  background-color: #000;
}

.tools {
  display: grid;
  flex: none;
  grid-template-columns: repeat(4, 38px);
  gap: 2px;
  padding: 0 2px 2px 1px;
  border: 2px solid;
  border-color: #35685a #55807a #b8ece4 #35685a;
}

.edit-tools {
  border-color: #000 #707070 #707070 #35685a;
}

.tools button {
  width: 38px;
  height: 38px;
  padding: 1px;
  background-color: #9bdbdb;
  border: 3px solid;
  border-color: #ccf4f4 #5c8c8c #5c8c8c #ccf4f4;
}

.tools svg {
  width: 30px;
  height: 30px;
  outline: 1px solid #000;
  outline-offset: -1px;
}

.tools text {
  font: bold 15px "Liberation Sans", sans-serif;
  text-anchor: middle;
}

.tools .alert {
  border-color: #f02020 #a01010 #a01010 #f02020;
}

.edit-tools button {
  background-color: #d4d4d4;
  border-color: #f0f0f0 #888 #888 #f0f0f0;
}

.edit-tools .paper {
  background-color: #fff;
}

.edit-tools .active {
  background-color: #ffc84e;
  border-color: #ffe8b0 #a87820 #a87820 #ffe8b0;
}

.overview {
  flex: 1;
  padding-top: 65px;
  border-right: 2px solid #55cdb0;
}

.overview-board {
  height: 107px;
  padding-top: 13px;
  background-color: #f00;
}

.overview-board::before {
  content: "";
  display: block;
  border-top: 1px solid #f08000;
}

.overview-foot {
  height: 46px;
  background-color: #55cdb0;
  border-top: 2px solid #a8f0e0;
}

/* bottom strip */
.footer {
  flex: none;
}

.bottom-tools {
  display: flex;
  gap: 2px;
  height: 33px;
  padding-left: 1px;
  background-color: #000;
}

.bottom-tools button {
  width: 31px;
  height: 31px;
  padding: 2px;
  background-color: #ffffcc;
  border: 3px double #b8b890;
  outline: 1px solid #ffffcc;
  outline-offset: -1px;
}

.bottom-tools svg {
  width: 21px;
  height: 21px;
  border: 1px solid #000;
}

.status {
  height: 31px;
  padding: 2px;
  background-color: #b0ffff;
  border-top: 1px solid #4f8080;
  border-left: 1px solid #4f8080;
}

.status-line {
  height: 26px;
  padding-left: 625px;
  background-color: #b0ffff;
  border: 1px solid #000;
  border-bottom-width: 2px;
  font-size: 12px;
  line-height: 26px;
}

.prompt {
  height: 16px;
  background-color: #ffffcc;
  border-bottom: 4px solid #d4d0c8;
}

/* floating windows */
.window {
  position: absolute;
  display: flex;
  flex-direction: column;
  padding: 2px;
  background-color: #d4d0c8;
  border: 1px solid;
  border-color: #fff #404040 #404040 #fff;
}

.window-title {
  background: linear-gradient(90deg, #0a246a, #a6caf0);
  color: #fff;
}

.window-title.inactive {
  padding-left: 3px;
  background: linear-gradient(90deg, #808080, #c0c0c0);
  color: #d8d4cc;
}

.popview {
  top: 415px;
  left: 65px;
  width: 634px;
  height: 401px;
}

.popview-view {
  flex: 1;
  margin: 1px 0 0 1px;
  background-color: #000;
  border: 2px solid;
  border-left-width: 3px;
  border-color: #35685a #a8f0e0 #a8f0e0 #35685a;
}

.popview-view svg {
  width: 100%;
  height: 100%;
}

.popview-foot {
  margin-left: 1px;
  padding: 2px;
  background-color: #55cdb0;
  border: 1px solid #000;
}

.popview-foot button {
  width: 100%;
  height: 24px;
  background-color: #9bdbdb;
  border: 2px solid;
  border-color: #ccf8f8 #4f8080 #4f8080 #ccf8f8;
}

.manager {
  top: 401px;
  right: 20px;
  width: 772px;
  height: 448px;
}

.manager-body {
  display: flex;
  flex: 1;
  flex-direction: column;
  min-height: 0;
  background-color: #55cdb0;
  white-space: nowrap;
}

.form-row {
  display: flex;
}

.row-one {
  height: 33px;
}

.row-two {
  height: 29px;
}

.cell {
  display: flex;
  align-items: center;
  padding: 2px;
  border: 1px solid #000;
}

.cyan {
  background-color: #9bdbdb;
}

.cell button {
  width: 100%;
  height: 100%;
  padding: 0 1px;
  background-color: #9bdbdb;
  border: 2px solid;
  border-color: #ccf8f8 #4f8080 #4f8080 #ccf8f8;
  text-align: left;
}

.layer-cell {
  width: 167px;
}

.cell .wide {
  display: flex;
  align-items: center;
  justify-content: space-between;
  padding-right: 12px;
}

.layer-value {
  width: 110px;
}

/* text box with the dotted insertion bar of the toolkit */
.field {
  position: relative;
  display: block;
  width: 100%;
  height: 100%;
}

.field::before {
  content: "";
  position: absolute;
  top: 3px;
  left: 5px;
  height: 14px;
  border-left: 1px dotted #000;
}

.field input {
  display: block;
  width: 100%;
  height: 100%;
  padding: 0 0 6px 5px;
  border: 2px solid;
  border-color: #4f8080 #ccf8f8 #ccf8f8 #4f8080;
}

.layer-value input {
  padding-bottom: 8px;
}

.row-two .field input {
  padding-bottom: 4px;
}

.menu {
  position: relative;
  display: block;
}

.menu select {
  display: block;
  width: 100%;
  height: 100%;
  appearance: none;
  border: 2px solid;
  border-color: #ccf8f8 #4f8080 #4f8080 #ccf8f8;
}

.menu::after {
  content: "";
  position: absolute;
  top: 50%;
  right: 8px;
  width: 12px;
  height: 7px;
  margin-top: -3px;
  border: 2px solid;
  border-color: #ccf8f8 #4f8080 #4f8080 #ccf8f8;
  pointer-events: none;
}

.slots {
  width: 187px;
  margin-left: 150px;
  padding-left: 9px;
}

.slots .menu {
  flex: 1;
  height: 27px;
  margin-left: 7px;
}

.slots select {
  padding-left: 29px;
}

.thickness {
  width: 307px;
  padding: 1px;
}

.thickness .field {
  width: 104px;
  height: 23px;
  margin: 0 3px 0 13px;
}

.params {
  width: 176px;
}

.params-value {
  width: 128px;
  margin-left: 3px;
}

.bottom-menu {
  width: 120px;
  height: 31px;
  margin-left: auto;
  background-color: #55cdb0;
}

.bottom-menu select {
  border-color: #a8f0e0 #35685a #35685a #a8f0e0;
}

.tool-area {
  flex: 1;
  overflow: hidden;
  margin: 0 3px 0 2px;
  padding: 1px 0 0 2px;
  border: 2px solid;
  border-color: #35685a #a8f0e0 #a8f0e0 #35685a;
}

.tool-table {
  width: 818px;
  table-layout: fixed;
  border-spacing: 0;
}

.tool-table th {
  height: 39px;
  padding: 0 0 2px;
  background-color: #b0ffff;
  border-right: 2px solid #000;
  border-bottom: 2px solid #000;
  line-height: 15px;
}

.tool-table td {
  height: 33px;
  padding: 2px;
  border-right: 2px solid #000;
  border-bottom: 2px solid #000;
}

.tool-table .w-plus { width: 27px; }
.tool-table .w-tool { width: 68px; }
.tool-table .w-count { width: 60px; padding-right: 8px; }
.tool-table .w-slot { width: 69px; }
.tool-table .w-type { width: 115px; }
.tool-table .w-size { width: 83px; }
.tool-table .w-tol { width: 74px; }
.tool-table .w-rest { text-align: left; padding-left: 2px; }

.tool-table .plus button {
  display: block;
  width: 20px;
  height: 20px;
  background-color: #fff;
  border: 1px solid #000;
}

.tool-table .plus svg {
  width: 18px;
  height: 18px;
}

.tool-table .tool button {
  display: block;
  width: 62px;
  height: 27px;
  border: 2px solid;
  border-color: #a8f0e0 #35685a #35685a #a8f0e0;
  text-align: left;
}

.tool-table .tool .on {
  background-color: #ffc84e;
}

.tool-table .num {
  text-align: right;
}

.tool-table .cream {
  background-color: #ffffcc;
}

.tool-table .plain {
  background-color: #fff;
}

.tool-table .focus {
  box-shadow: inset 0 0 0 2px #000;
}

.tool-table .field {
  height: 27px;
}

.tool-table .field input {
  border-color: #a0a080 #d0d0a8 #d0d0a8 #a0a080;
}

.tool-table .plain .field input {
  border-color: #999 #ccc #ccc #999;
}

.tool-table .menu {
  height: 27px;
  margin-left: 4px;
}

.tool-table .menu select {
  padding-left: 2px;
  border-color: #d8d8b0 #a0a080 #a0a080 #d8d8b0;
}

.tool-table .menu::after {
  right: 6px;
  border-color: #d0d0a8 #a0a080 #a0a080 #d0d0a8;
}

.hscroll {
  display: flex;
  align-items: center;
  flex: none;
  height: 15px;
  margin: 3px 3px 6px 1px;
  background-color: #3fae92;
  border: 2px solid;
  border-color: #35685a #a8f0e0 #a8f0e0 #35685a;
}

.hscroll svg {
  width: 12px;
  height: 12px;
}

.hscroll .thumb {
  flex: 1;
  height: 11px;
  margin-right: 52px;
  background-color: #55cdb0;
  border: 2px solid;
  border-color: #a8f0e0 #35685a #35685a #a8f0e0;
}

.manager-bar {
  display: flex;
  flex: none;
  align-items: center;
  height: 32px;
  border-top: 1px solid #000;
}

.manager-bar button {
  height: 31px;
  margin-right: 3px;
  padding-top: 2px;
  background-color: #9bdbdb;
  border: 2px solid;
  border-color: #ccf8f8 #4f8080 #4f8080 #ccf8f8;
  outline: 1px solid #000;
}

.manager-bar label {
  padding-top: 2px;
}

.current-tool {
  width: 41px;
  height: 31px;
  margin-right: 4px;
  padding-left: 4px;
  background-color: #ffc84e;
  border-right: 1px solid #000;
  font-size: 12px;
  line-height: 32px;
}

.manager-bar .b-first { width: 56px; }
.manager-bar .b-step { width: 32px; }
.manager-bar .b-last { width: 47px; }

.manager-bar .index {
  width: 60px;
  height: 30px;
  margin: 0 5px 0 6px;
}

.manager-bar .index input {
  border-color: #35685a #a8f0e0 #a8f0e0 #35685a;
}

.manager-bar .b-icon {
  width: 27px;
  padding: 0 0 0 4px;
}

.manager-bar .b-icon svg {
  width: 16px;
  height: 18px;
}

.manager-bar .menu {
  height: 31px;
  background-color: #9bdbdb;
  outline: 1px solid #000;
}

.manager-bar .menu select {
  padding: 2px 0 0 9px;
}

.manager-bar .units {
  width: 86px;
  margin-left: auto;
}

.manager-bar .mode {
  width: 113px;
  margin: 0 3px 0 2px;
}

/* red frame drawn over the T03 row */
.callout {
  position: absolute;
  top: 155px;
  left: 217px;
  width: 455px;
  height: 43px;
  border: 3px solid #dc1414;
  box-shadow: 2px 3px 3px rgba(0,0,0,0.4);
  pointer-events: none;
}
```
